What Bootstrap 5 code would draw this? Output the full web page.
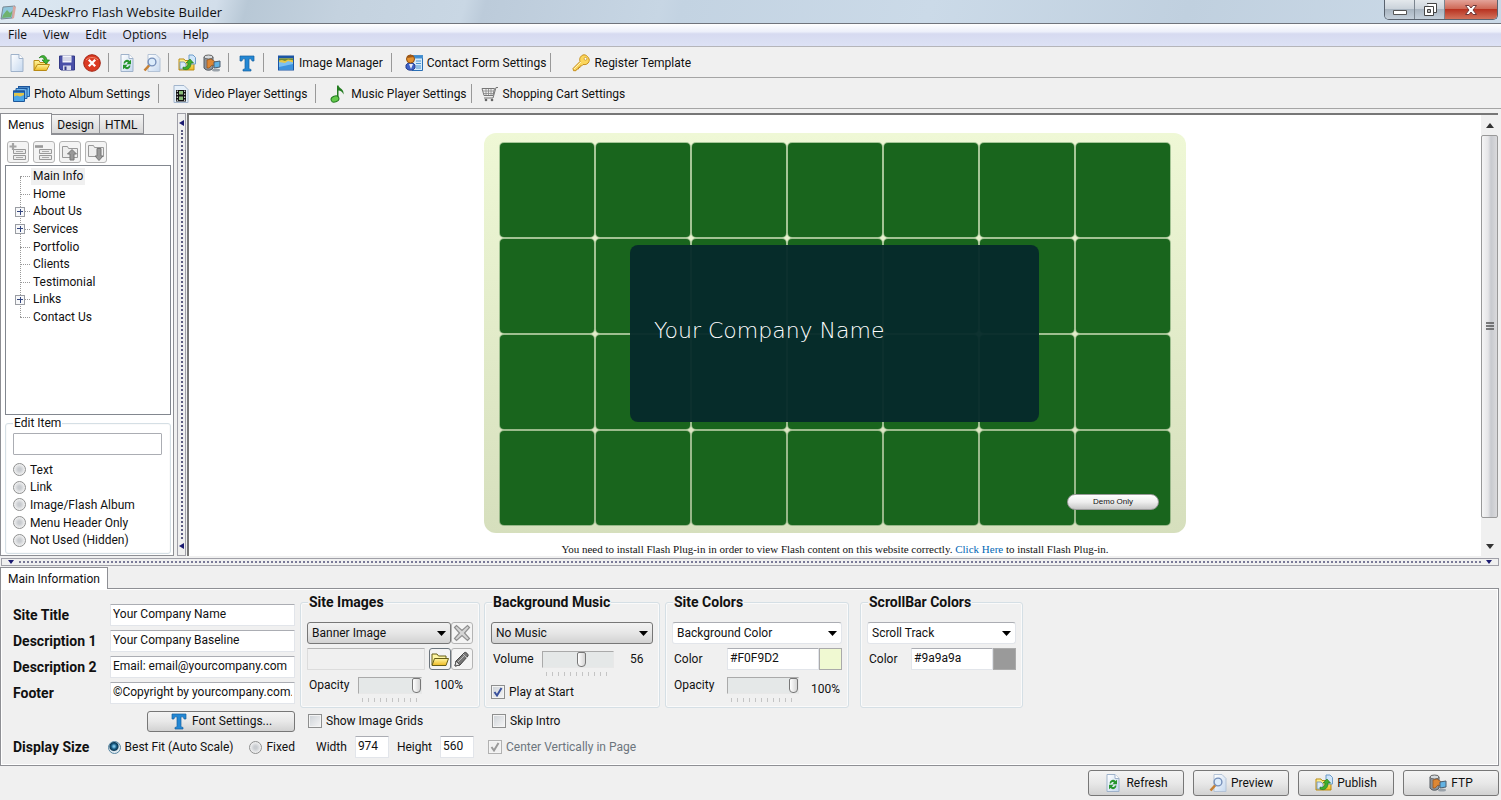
<!DOCTYPE html>
<html lang="en">
<head>
<meta charset="utf-8">
<meta name="viewport" content="width=device-width, initial-scale=1">
<title>A4DeskPro Flash Website Builder</title>
<link href="https://cdn.jsdelivr.net/npm/bootstrap@5.3.0/dist/css/bootstrap.min.css" rel="stylesheet">
<script src="https://cdn.jsdelivr.net/npm/bootstrap@5.3.0/dist/js/bootstrap.bundle.min.js" defer></script>
<style>
:root{--face:#f0f0f0;--edge:#8e8f94;--soft:#d5dfe5}
body{font:12px/16px Roboto,"Liberation Sans",sans-serif;color:#111;background:var(--face)}
.app{min-height:100vh}
button,input,select{font:inherit;color:inherit}
.ic{width:18px;height:18px;flex:none}
.titlebar{height:24px;border-bottom:1px solid #70747c;font:13px/22px "Open Sans","Noto Sans",sans-serif;
  background:linear-gradient(105deg,#dce8f2 0,#d2deea 210px,#b8c8d6 240px,#c4d2df 330px,#c9d7e4 450px,#bccbda 470px,#c7d6e4 640px,#c3d3e2 660px,#cbdae8 900px,#c0d0df 1150px,#cad9e7 1400px)}
.winbtns{border:1px solid #59626e;border-top:0;border-radius:0 0 5px 5px;height:20px;margin-right:3px;overflow:hidden}
.winbtns button{border:0;border-right:1px solid #7b858f;padding:0;width:30px;height:19px;line-height:0;background:linear-gradient(#e3e8ec,#cbd3db 45%,#a9b5c1 50%,#c4cfda)}
.winbtns .closer{width:52px;border-right:0;background:linear-gradient(#e3a399,#cf6a58 45%,#b93422 50%,#d2735c)}
.menubar{height:23px;font:12px/22px "Open Sans","Noto Sans",sans-serif;border-bottom:1px solid #b5b5b9;
  background:linear-gradient(#fff,#eceffa 35%,#d6daf0 45%,#dde2f5)}
.menubar a{color:#111;text-decoration:none}
.tbar{height:31px;padding-top:1px;border-bottom:1px solid #a5a5a5;background:var(--face)}
.tbtn{border:0;background:none;padding:0;height:24px;display:flex;align-items:center;justify-content:center;gap:4px;white-space:nowrap}
.tbtn.solo{width:25px}
.vsep{width:1px;height:19px;background:#999;margin:0 5px 0 4px}
.side{width:174px}
.tab{border:1px solid var(--edge);border-left-width:0;padding:0 5px;height:20px;line-height:20px;background:linear-gradient(#f4f4f4,#e6e6e6 50%,#d8d8d8)}
.tab.on{background:#fff;height:22px;line-height:20px;border-bottom:0;margin-bottom:-1px;position:relative;border-left-width:1px;padding:0 7px}
.page{background:#fff;border:1px solid var(--edge);padding:6px 2px 1px 4px}
.treebtns{gap:4px;padding:0 0 2px 2px}
.sqbtn{width:22px;height:22px;padding:0;border:1px solid #b4b4b4;border-radius:3px;background:#f4f4f4;line-height:0;display:flex;align-items:center;justify-content:center}
.treebox{border:1px solid #82878f;padding:2px 0 0 14px;min-height:170px;background:#fff}
.tree{height:158px;position:relative}
.tree::before{content:"";position:absolute;left:0;top:9px;bottom:9px;border-left:1px dotted #999}
.tree li{flex:1 1 0;display:flex;align-items:center}
.tree li::before{content:"";width:10px;border-top:1px dotted #999;margin-right:1px}
.tree a{color:#111;text-decoration:none;padding:0 2px;line-height:17px}
.tree a.cur{background:#f0f0f0}
.plus{position:absolute;left:-5px;width:10px;height:10px;border:1px solid #9a9da3;background:#f7f8fa;padding:0;line-height:0}
.plus::before{content:"";position:absolute;left:1px;top:3px;width:6px;height:1px;background:#33457f}
.plus::after{content:"";position:absolute;left:4px;top:1px;width:1px;height:6px;background:#33457f}
fieldset.grp{border:1px solid var(--soft);border-radius:3px;padding:0 6px;box-shadow:inset 0 0 0 1px #fafafa;min-width:0}
.grp legend{float:none;width:auto;margin:0 0 0 1px;padding:0 1px;font-size:12px;line-height:16px;position:relative;background:var(--face)}
.page .grp{padding:0 8px 4px 7px}
.page .grp legend{background:#fff;font-weight:400;margin:0 0 2px}
.work .grp legend,.lbl{font-weight:700;font-size:14px}
.fld{border:1px solid #e2e5ea;border-top-color:#abadb3;background:#fff;height:22px;padding:0 2px 2px;min-width:0;border-radius:1px}
.fld:disabled{background:var(--face);border-color:#dcdcdc;border-top-color:#b5b5b5}
.fld.boxed{border-color:#abadb3;margin-bottom:6px}
.radios{height:88px}
.radios label,.chk{display:flex;align-items:center;gap:4px;white-space:nowrap}
.radios label{flex:1 1 0}
.rd{appearance:none;width:13px;height:13px;margin:0;border:1px solid #8e8f8f;border-radius:50%;background:radial-gradient(#c9ccd0 20%,#f5f5f5 75%);flex:none}
.rd:checked{border-color:#5586a3;background:radial-gradient(circle at 45% 40%,#7cc4e8 8%,#155a83 30%,#0d3955 45%,#dfe9ef 58%)}
.ck{appearance:none;width:14px;height:14px;margin:0;border:1px solid #8e8f8f;box-shadow:inset 0 0 0 1px #f4f4f4;background:linear-gradient(135deg,#cdd2d7,#f6f6f6);flex:none}
.ck:checked{background:url("data:image/svg+xml,%3Csvg xmlns='http://www.w3.org/2000/svg' viewBox='0 0 12 12'%3E%3Cpath d='M2.5 6l2.5 3.500 4.500-7.500' fill='none' stroke='%233a519c' stroke-width='2'/%3E%3C/svg%3E"),linear-gradient(135deg,#cdd2d7,#f6f6f6)}
.ck:disabled{border-color:#b1b1b1;background:url("data:image/svg+xml,%3Csvg xmlns='http://www.w3.org/2000/svg' viewBox='0 0 12 12'%3E%3Cpath d='M2.500 6l2.500 3.500 4.500-7.500' fill='none' stroke='%23999' stroke-width='2'/%3E%3C/svg%3E")}
.vsplit{width:9px;border:1px solid #a0a0a8;padding:6px 0;margin:0 1px 0 3px}
.vsplit i{flex:1;border-left:2px dotted #5c5c80;margin:4px 0}
.hsplit{height:8px;border:1px solid #a0a0a8;margin:2px 2px 1px 1px;padding:0 6px}
.hsplit i{flex:1;border-top:2px dotted #7a7a98;margin:0 5px}
.view{background:#fff;border-left:2px solid #777;border-top:2px solid #777;flex:1 1 0;min-width:0;margin-right:3px}
.site{overflow:hidden;flex:1 1 0;min-width:0;height:0;min-height:100%;padding-top:18px}
.board{width:702px;max-width:100%;position:relative;padding:10px 16px 8px;border-radius:12px;background:linear-gradient(#eff8d6,#d6dfbd);margin:0 auto}
.tiles{display:grid;grid-template-columns:repeat(7,1fr);gap:2px}
.tiles span{height:94px;border-radius:4px;background:#19651d;box-shadow:0 0 0 1px #19651d55}
.banner{position:absolute;left:146px;top:112px;width:409px;height:177px;border-radius:8px;background:#062a2bf6;color:#fff;padding:0 24px 6px;font:200 22px/28px "DejaVu Sans",sans-serif;display:flex;align-items:center}
.demo{position:absolute;right:27px;bottom:23px;width:92px;height:16px;border:1px solid #999;border-radius:8px;padding:0;background:linear-gradient(#fff,#eee 50%,#c6c6c6);font:8px/12px "Liberation Sans",sans-serif}
.plug{font:11px/12px "Liberation Serif",serif;padding-top:10px;white-space:nowrap}
.plug a{color:#0066b5;text-decoration:none}
.sbar{width:17px;background:#f0f0f0}
.sbar div{height:20px;display:flex;align-items:center;justify-content:center}
.sbar .thumb{flex:1;height:auto;border:1px solid #999;border-radius:2px;background:linear-gradient(90deg,#f5f5f5,#e6e6e8 40%,#c8cacf 60%,#dadadc);margin-bottom:18px}
.work{border:1px solid var(--edge);box-shadow:inset 0 0 0 1px #fff;margin:0 2px 0 0;padding:5px 12px 5px}
.fields{padding-top:10px}
.field-row{height:22px;margin-bottom:4px}
.field-row .lbl{width:97px}
.sect{height:114px}
.sect .inner{padding-top:12px}
.below{height:26px}
.sel{appearance:none;border:1px solid #777;border-radius:3px;height:22px;padding:0 14px 0 4px;min-width:0;width:100%;
 background:url("data:image/svg+xml,%3Csvg xmlns='http://www.w3.org/2000/svg' viewBox='0 0 10 5'%3E%3Cpath d='M0 0h9L4.500 5z'/%3E%3C/svg%3E") no-repeat right 3px center/10px 5px,linear-gradient(#f2f2f2,#e6e6e6 50%,#d2d2d2)}
.sel.flat{border-color:#e2e5ea;border-top-color:#abadb3;background-image:url("data:image/svg+xml,%3Csvg xmlns='http://www.w3.org/2000/svg' viewBox='0 0 10 5'%3E%3Cpath d='M0 0h9L4.500 5z'/%3E%3C/svg%3E");background-color:#fff}
.slide{line-height:0}
.slide input{appearance:none;width:100%;height:17px;margin:0;border:1px solid #e8e8e8;border-top-color:#aaa;border-left-color:#aaa;background:#e5e8e8;display:block}
.slide input::-webkit-slider-thumb{appearance:none;width:9px;height:15px;border:1px solid #777;border-radius:2px 2px 4px 4px;background:linear-gradient(90deg,#fff,#d5d5d5)}
.ticks{height:4px;margin:4px 0 0 4px;width:58px;background:repeating-linear-gradient(90deg,#c4c4c4 0 1px,transparent 1px 6px)}
.pbtn{border:1px solid #777;border-radius:3px;background:linear-gradient(#f4f4f4,#e8e8e8 50%,#d2d2d2);padding:0;display:flex;align-items:center;justify-content:center;gap:4px}
.foot{height:34px;padding-right:2px}
.foot .pbtn{width:96px;height:26px}
.fgap{gap:9px}
.sw{width:23px;height:22px;border:1px solid #aaa;padding:0}
.cl{background:#f0f9d2}.cg{background:#9a9a9a}
.colA{width:282px;margin-right:5px}.colB{width:180px;margin-right:4px}.colC{width:176px;margin-right:5px}.colD{width:184px;margin-right:11px}.colE{width:163px}
.fontset{width:148px;height:21px}
.dsp{width:97px}
.srow{padding-top:7px;height:34px}.srow.up{height:40px}
.sl{width:51px;padding-left:2px}.sn{width:64px}.wd{width:72px}
.wd .ticks{width:66px}
.cl-l{width:55px;padding-left:2px}.cs-l{width:44px;padding-left:2px}
.num{width:34px}
</style>
</head>
<body>
<svg width="0" height="0" class="position-absolute" aria-hidden="true">
 <defs><linearGradient id="gf" x2="0" y2="1"><stop stop-color="#fff6a0"/><stop offset="1" stop-color="#eeb923"/></linearGradient>
 <linearGradient id="gb" x2="1" y2="1"><stop stop-color="#fff"/><stop offset="1" stop-color="#c5d8ef"/></linearGradient></defs>
 <symbol id="doc" viewBox="0 0 18 18"><path d="M3 .5h8l4 4v13H3z" fill="url(#gb)" stroke="#9fb2ca"/><path d="M11 .5v4h4" fill="#fff" stroke="#9fb2ca"/></symbol>
 <symbol id="open" viewBox="0 0 18 18"><path d="M1 16.500V6.500h5l1 2h7v3" fill="url(#gf)" stroke="#b98b14"/><path d="M1 16.500l3.500-6h12l-3 6z" fill="url(#gf)" stroke="#b98b14"/><path d="M6 4c3-4 7-3 8 2h2.500L13 10 9 6h2.500C10.500 3 8.500 2.500 6 4z" fill="#3fb534" stroke="#20791b" stroke-width=".7"/></symbol>
 <symbol id="save" viewBox="0 0 18 18"><path d="M1.500 2h15v14H3l-1.500-1.500z" fill="#4a50a8" stroke="#343a86"/><path d="M4.500 1.500h9v7h-9z" fill="#f3f4fb"/><path d="M5 4h8M5 6h8" stroke="#b9bcd6"/><path d="M5 11.500h8V16H5z" fill="#d8daeb"/><path d="M6.500 12.500h2V16h-2z" fill="#343a86"/></symbol>
 <symbol id="stop" viewBox="0 0 18 18"><circle cx="9" cy="9" r="8.300" fill="#db3a22" stroke="#a32413"/><path d="M3 6a7 5 0 0 1 12 0" stroke="#f08d72" fill="none"/><path d="M5.800 5.800l6.400 6.400m0-6.400l-6.400 6.400" stroke="#fff" stroke-width="2.300"/></symbol>
 <symbol id="refresh" viewBox="0 0 18 18"><use href="#doc"/><path d="M5.500 9.500c.5-4 4.500-4.500 6-2.500l1.500-1.200v4.400H8.500L10 8.600C9 7.500 7.500 8 7 9.500zM12.500 11.500c-.5 4-4.500 4.500-6 2.500L5 15.200v-4.400h4.500L8 12.400c1 1.100 2.500.6 3-.9z" fill="#26962e"/></symbol>
 <symbol id="find" viewBox="0 0 18 18"><path d="M5 .5h8l4 4v13H5z" fill="url(#gb)" stroke="#b4c3d6"/><path d="M6.500 11L1.500 16.500" stroke="#c68135" stroke-width="2.600"/><circle cx="9" cy="8" r="3.900" fill="#dcecfb" stroke="#7690ba" stroke-width="1.400"/></symbol>
 <symbol id="pub" viewBox="0 0 18 18"><path d="M1 5h5l1 1.500h9V16H1z" fill="url(#gf)" stroke="#b98b14"/><path d="M11 1h4l2.500 2.500V10H11z" fill="#cfe5fa" stroke="#6d9cc9"/><path d="M2 8h4l2 2v5H2z" fill="#d8e8f8" stroke="#7d9ec0"/><path d="M5 13c3 1 5-1 5-4H8l4-4 3.500 4H13c0 5-3 8-8 6z" fill="#3fae2e" stroke="#1e7417" stroke-width=".6"/></symbol>
 <symbol id="ftp" viewBox="0 0 18 18"><path d="M1 3v11c2 3 7 3 9 0V3z" fill="#8c9299" stroke="#53585e"/><ellipse cx="5.500" cy="3" rx="4.500" ry="2" fill="#d4d9dd" stroke="#666"/><path d="M4 6l4-1 6 4-2 3-3-1-3 3H4z" fill="#dd8735" stroke="#975018" stroke-width=".7"/><path d="M11 8l6-1v6l-6 1z" fill="#62b3e4" stroke="#4a5d70"/><ellipse cx="13" cy="16" rx="4" ry="1.500" fill="#9aa2aa"/></symbol>
 <symbol id="tee" viewBox="0 0 18 18"><path d="M2 2h14v5h-2c-.3-1.700-.7-2.200-3-2.200v9c0 1.200.5 1.400 2 1.600V17H5v-1.600c1.500-.2 2-.4 2-1.600v-9C4.700 4.800 4.300 5.300 4 7H2z" fill="#2387d4" stroke="#15609f" stroke-width=".7"/></symbol>
 <symbol id="img" viewBox="0 0 18 18"><path d="M1 1.500h16v15H1z" fill="#1b55a4"/><path d="M2 4.500h14v11H2z" fill="#7cc0f2"/><path d="M2 4.500h14v4l-5-1.500-3 2-6-1z" fill="#e7c848"/><path d="M2 4.500h14v1.800l-5-.8-3 1.500-3-1-3 .5z" fill="#718b32"/><path d="M2 13l14-3v5.500H2z" fill="#3d92dd"/></symbol>
 <symbol id="contact" viewBox="0 0 18 18"><path d="M7 1.500h10.500v15H7z" fill="#d5ebfb" stroke="#2a6fb5"/><path d="M7 1.500h10.500V4H7zM11 7h5M11 9.500h5M11 12h5M11 14h5" fill="#3c8bd3" stroke="#4a92cf"/><path d="M1 11c2-3 7-3 9 0v3c-2 3-7 3-9 0z" fill="#3f62c7" stroke="#253f91"/><path d="M4 10l2 5 2-5z" fill="#e8ecfa"/><circle cx="5.500" cy="5" r="4" fill="#e5902b" stroke="#8e4f13"/><path d="M2 4C3 0 7 0 9 3z" fill="#9b5618"/></symbol>
 <symbol id="key" viewBox="0 0 18 18"><path d="M1 14.500l7-7c-1-3 .5-5.500 3-6.500 1.500-.5 3 0 4.500 1.500S17.700 6 17 7.500c-1 2.500-3 3.500-6 3l-1.500 1.500H8v1.500H6.500V15H5l-1 1.700H1.500z" fill="#fbd65c" stroke="#c68e1c"/><circle cx="13.500" cy="4.800" r="1.400" fill="#fff" stroke="#c68e1c" stroke-width=".7"/><path d="M2 15l7-7" stroke="#fff2b6"/></symbol>
 <symbol id="album" viewBox="0 0 18 18"><path d="M6.500 1.500h11v10h-11z" fill="#72b8ed" stroke="#2162a7"/><path d="M4 3.500h11v10H4z" fill="#72b8ed" stroke="#2162a7"/><path d="M1.500 6h11v10.500h-11z" fill="#4ba6e8" stroke="#1c569a"/><path d="M1 5.500h12v2H1zM3.500 3h12v1.500M6 1h12v1.500H6z" fill="#1d559c"/><path d="M2 8h10v2l-4 1.500-3-1-3 1z" fill="#e0c44a"/></symbol>
 <symbol id="video" viewBox="0 0 18 18"><path d="M2 .5h10l4 4v13H2z" fill="#e6f0fa" stroke="#a2b5cc"/><path d="M4 5h10v11.500H4z" fill="#111"/><path d="M7 6h4v3.500H7zM7 11.500h4V15H7z" fill="#89bc7a"/><path d="M5.300 5.500v11M12.700 5.500v11" stroke="#eee" stroke-dasharray="1.500 1.500"/></symbol>
 <symbol id="music" viewBox="0 0 18 18"><path d="M8 14V.5h1.500c.5 3 6 3.500 5 9-1-2.500-3-4-5-4V14" fill="#237b20"/><ellipse cx="6" cy="14" rx="4" ry="3" fill="#65ca4c" stroke="#237b20" transform="rotate(-20 6 14)"/></symbol>
 <symbol id="cart" viewBox="0 0 18 18"><path d="M1 3.500h12.500L12 10.500H3zM17 2.500h-2l-3 10.500H3" fill="#eee" stroke="#777"/><path d="M2 6h11M3 8.500h9.500M5 4v6m2.500-6v6M10 4v6" stroke="#888" stroke-width=".8"/><circle cx="5" cy="15" r="1.300" fill="#666"/><circle cx="11" cy="15" r="1.300" fill="#666"/></symbol>
 <symbol id="folder" viewBox="0 0 18 18"><path d="M1 15V4h5l1.500 2H15v3" fill="#fff7a5" stroke="#665e17"/><path d="M1 15.500L3.500 8.500h14l-2.500 7z" fill="url(#gf)" stroke="#665e17"/></symbol>
 <symbol id="pen" viewBox="0 0 18 18"><path d="M2 16l1-5 8.500-8.500c1-1 4.500 2 3.500 3.500L7 15z" fill="#777" stroke="#444"/><path d="M3 11l4 4-5 1z" fill="#ddd" stroke="#555"/><path d="M10 4l4 4M5 12l7-7" stroke="#bbb"/></symbol>
 <symbol id="cross" viewBox="0 0 18 18"><path d="M1.500 3.500l2-2L9 6.500l5.500-5 2 2L11.500 9l5 5.500-2 2L9 11.500l-5.500 5-2-2L6.500 9z" fill="#d6d6d6" stroke="#8f8f8f" stroke-width="1.200"/></symbol>
 <symbol id="rows" viewBox="0 0 18 18"><path d="M4.500 6.500h12v4h-12zM4.500 12.500h12v4h-12z" fill="#ececec" stroke="#999"/><path d="M7 8.500h7M7 14.500h7" stroke="#aaa"/></symbol>
 <symbol id="add" viewBox="0 0 18 18"><use href="#rows"/><path d="M4 0v7M.5 3.500h7" stroke="#a4a4a4" stroke-width="2.200"/></symbol>
 <symbol id="sub" viewBox="0 0 18 18"><use href="#rows"/><path d="M0 3.500h8" stroke="#999" stroke-width="2.600"/></symbol>
 <symbol id="fup" viewBox="0 0 18 18"><path d="M1.500 14.500v-11h5l1 2h9v9z" fill="#eee" stroke="#999"/><path d="M11 6.500L6.500 11H9v6h4v-6h2.500z" fill="#999" stroke="#777"/></symbol>
 <symbol id="fdn" viewBox="0 0 18 18"><path d="M1.500 13.500v-11h5l1 2h9v9z" fill="#eee" stroke="#999"/><path d="M12 17.500L8 13h2V5.500h4V13h2z" fill="#999" stroke="#777"/></symbol>
</svg>

<div class="app d-flex flex-column">
 <header>
  <div class="titlebar d-flex justify-content-between">
   <div class="d-flex align-items-center gap-1"><svg class="ic" viewBox="0 0 18 18"><path d="M3 4l12-1-3 12-11 1z" fill="#8fc6dc" stroke="#7b8a94"/><path d="M3 12l4-5 3 3 3-3-2 7-9 1z" fill="#6fb26e"/><path d="M13 3l3 1-2 11-2 1z" fill="#d8a7a0"/></svg><span>A4DeskPro Flash Website Builder</span></div>
   <div class="winbtns d-flex">
    <button aria-label="Minimize"><svg width="16" height="16"><path d="M1.500 8.500h13v4h-13z" fill="#fff" stroke="#555"/></svg></button>
    <button aria-label="Restore"><svg width="16" height="16"><path d="M5 1.500h9.500v9H12M2.500 4.500h9v9h-9z" fill="#fff" stroke="#444"/><path d="M5.500 7.500h3v3h-3z" fill="#bbb" stroke="#444"/></svg></button>
    <button class="closer" aria-label="Close"><svg width="16" height="16"><path d="M2.500 3.500h3.500l2 2.500 2-2.500h3.500L10 8l3.500 4.500H10L8 10l-2 2.500H2.500L6 8z" fill="#fff" stroke="#70393a"/></svg></button>
   </div>
  </div>
  <nav class="menubar d-flex px-2" aria-label="Menu"><a href="#" class="me-3">File</a><a href="#" class="me-3">View</a><a href="#" class="me-3">Edit</a><a href="#" class="me-3">Options</a><a href="#">Help</a></nav>
  <div class="tbar d-flex align-items-center px-1">
   <button class="tbtn solo" aria-label="New"><svg class="ic"><use href="#doc"/></svg></button>
   <button class="tbtn solo" aria-label="Open"><svg class="ic"><use href="#open"/></svg></button>
   <button class="tbtn solo" aria-label="Save"><svg class="ic"><use href="#save"/></svg></button>
   <button class="tbtn solo" aria-label="Close project"><svg class="ic"><use href="#stop"/></svg></button>
   <span class="vsep"></span>
   <button class="tbtn solo" aria-label="Refresh"><svg class="ic"><use href="#refresh"/></svg></button>
   <button class="tbtn solo" aria-label="Preview"><svg class="ic"><use href="#find"/></svg></button>
   <span class="vsep"></span>
   <button class="tbtn solo" aria-label="Publish"><svg class="ic"><use href="#pub"/></svg></button>
   <button class="tbtn solo" aria-label="FTP"><svg class="ic"><use href="#ftp"/></svg></button>
   <span class="vsep"></span>
   <button class="tbtn solo" aria-label="Font"><svg class="ic"><use href="#tee"/></svg></button>
   <span class="vsep"></span>
   <button class="tbtn ms-2 me-1"><svg class="ic"><use href="#img"/></svg>Image Manager</button>
   <span class="vsep"></span>
   <button class="tbtn ms-2"><svg class="ic"><use href="#contact"/></svg>Contact Form Settings</button>
   <span class="vsep"></span>
   <button class="tbtn ms-3"><svg class="ic"><use href="#key"/></svg>Register Template</button>
  </div>
  <div class="tbar d-flex align-items-center px-2">
   <button class="tbtn ms-1 me-1"><svg class="ic"><use href="#album"/></svg>Photo Album Settings</button>
   <span class="vsep"></span>
   <button class="tbtn ms-2 me-1"><svg class="ic"><use href="#video"/></svg>Video Player Settings</button>
   <span class="vsep"></span>
   <button class="tbtn ms-2"><svg class="ic"><use href="#music"/></svg>Music Player Settings</button>
   <span class="vsep"></span>
   <button class="tbtn ms-1"><svg class="ic"><use href="#cart"/></svg>Shopping Cart Settings</button>
  </div>
 </header>

 <main class="d-flex flex-grow-1 pt-1">
  <aside class="side d-flex flex-column">
   <div class="d-flex align-items-end" role="tablist"><button class="tab on" role="tab">Menus</button><button class="tab" role="tab">Design</button><button class="tab" role="tab">HTML</button></div>
   <div class="page flex-grow-1 d-flex flex-column">
    <div class="treebtns d-flex">
     <button class="sqbtn" aria-label="Add item"><svg class="ic"><use href="#add"/></svg></button>
     <button class="sqbtn" aria-label="Remove item"><svg class="ic"><use href="#sub"/></svg></button>
     <button class="sqbtn" aria-label="Move up"><svg class="ic"><use href="#fup"/></svg></button>
     <button class="sqbtn" aria-label="Move down"><svg class="ic"><use href="#fdn"/></svg></button>
    </div>
    <div class="treebox flex-grow-1">
     <ul class="tree list-unstyled m-0 d-flex flex-column">
      <li><a href="#" class="cur">Main Info</a></li>
      <li><a href="#">Home</a></li>
      <li><button class="plus" aria-label="Expand About Us"></button><a href="#">About Us</a></li>
      <li><button class="plus" aria-label="Expand Services"></button><a href="#">Services</a></li>
      <li><a href="#">Portfolio</a></li>
      <li><a href="#">Clients</a></li>
      <li><a href="#">Testimonial</a></li>
      <li><button class="plus" aria-label="Expand Links"></button><a href="#">Links</a></li>
      <li><a href="#">Contact Us</a></li>
     </ul>
    </div>
    <fieldset class="grp">
     <legend>Edit Item</legend>
     <input class="fld boxed w-100" aria-label="Item text">
     <div class="radios d-flex flex-column">
      <label><input class="rd" type="radio" name="kind">Text</label>
      <label><input class="rd" type="radio" name="kind">Link</label>
      <label><input class="rd" type="radio" name="kind">Image/Flash Album</label>
      <label><input class="rd" type="radio" name="kind">Menu Header Only</label>
      <label><input class="rd" type="radio" name="kind">Not Used (Hidden)</label>
     </div>
    </fieldset>
   </div>
  </aside>
  <div class="vsplit d-flex flex-column align-items-center"><svg width="5" height="6"><path d="M5 0v6L0 3z" fill="#1a1a70"/></svg><i></i><svg width="5" height="6"><path d="M5 0v6L0 3z" fill="#1a1a70"/></svg></div>
  <section class="view d-flex">
   <div class="site">
    <div class="board">
     <div class="tiles"><span></span><span></span><span></span><span></span><span></span><span></span><span></span><span></span><span></span><span></span><span></span><span></span><span></span><span></span><span></span><span></span><span></span><span></span><span></span><span></span><span></span><span></span><span></span><span></span><span></span><span></span><span></span><span></span></div>
     <div class="banner">Your Company Name</div>
     <button class="demo">Demo Only</button>
    </div>
    <div class="plug text-center">You need to install Flash Plug-in in order to view Flash content on this website correctly. <a href="#">Click Here</a> to install Flash Plug-in.</div>
   </div>
   <div class="sbar d-flex flex-column" aria-hidden="true">
    <div><svg width="8" height="5"><path d="M0 5h8L4 0z" fill="#333"/></svg></div>
    <div class="thumb"><svg width="8" height="9"><path d="M0 1h8M0 4h8M0 7h8" stroke="#555" stroke-width="1.500"/></svg></div>
    <div><svg width="8" height="5"><path d="M0 0h8L4 5z" fill="#333"/></svg></div>
   </div>
  </section>
 </main>
 <div class="hsplit d-flex align-items-center"><svg width="6" height="4"><path d="M0 0h6L3 4z" fill="#1a1a70"/></svg><i></i><svg width="6" height="4"><path d="M0 0h6L3 4z" fill="#1a1a70"/></svg></div>

 <section>
  <div class="d-flex align-items-end" role="tablist"><button class="tab on" role="tab">Main Information</button></div>
  <form class="work d-flex">
   <div class="colA">
    <div class="fields">
     <div class="field-row d-flex align-items-center"><label class="lbl" for="f1">Site Title</label><input id="f1" class="fld flex-grow-1" value="Your Company Name"></div>
     <div class="field-row d-flex align-items-center"><label class="lbl" for="f2">Description 1</label><input id="f2" class="fld flex-grow-1" value="Your Company Baseline"></div>
     <div class="field-row d-flex align-items-center"><label class="lbl" for="f3">Description 2</label><input id="f3" class="fld flex-grow-1" value="Email: email@yourcompany.com"></div>
     <div class="field-row d-flex align-items-center"><label class="lbl" for="f4">Footer</label><input id="f4" class="fld flex-grow-1" value="©Copyright by yourcompany.com. ."></div>
    </div>
    <div class="below d-flex justify-content-end align-items-center"><button type="button" class="pbtn fontset"><svg class="ic"><use href="#tee"/></svg>Font Settings...</button></div>
    <div class="below d-flex align-items-center"><span class="lbl dsp">Display Size</span><label class="chk me-3"><input class="rd" type="radio" name="size" checked>Best Fit (Auto Scale)</label><label class="chk"><input class="rd" type="radio" name="size">Fixed</label></div>
   </div>
   <div class="colB">
    <fieldset class="grp sect"><legend>Site Images</legend>
     <div class="inner">
      <div class="d-flex"><select class="sel" aria-label="Site image"><option>Banner Image</option></select><button type="button" class="sqbtn flex-shrink-0" aria-label="Clear image"><svg class="ic"><use href="#cross"/></svg></button></div>
      <div class="d-flex pt-1"><input class="fld flex-grow-1 me-1" size="1" disabled aria-label="Image file"><button type="button" class="sqbtn border-secondary" aria-label="Browse"><svg class="ic"><use href="#folder"/></svg></button><button type="button" class="sqbtn" aria-label="Edit image"><svg class="ic"><use href="#pen"/></svg></button></div>
      <div class="d-flex srow"><label for="o1" class="sl">Opacity</label><div class="slide sn"><input id="o1" type="range" value="100"><div class="ticks"></div></div><output class="ms-2 ps-1">100%</output></div>
     </div>
    </fieldset>
    <div class="below d-flex align-items-center ps-2"><label class="chk"><input class="ck" type="checkbox">Show Image Grids</label></div>
    <div class="below d-flex align-items-center ps-3 gap-2"><label for="w1">Width</label><input id="w1" class="fld num" value="974"><label for="h1">Height</label><input id="h1" class="fld num" value="560"></div>
   </div>
   <div class="colC">
    <fieldset class="grp sect"><legend>Background Music</legend>
     <div class="inner">
      <select class="sel d-block" aria-label="Music"><option>No Music</option></select>
      <div class="d-flex srow up"><label for="v1" class="sl">Volume</label><div class="slide wd"><input id="v1" type="range" value="56"><div class="ticks"></div></div><output class="ms-3">56</output></div>
      <label class="chk"><input class="ck" type="checkbox" checked>Play at Start</label>
     </div>
    </fieldset>
    <div class="below d-flex align-items-center ps-2"><label class="chk"><input class="ck" type="checkbox">Skip Intro</label></div>
    <div class="below d-flex align-items-center ps-1"><label class="chk text-secondary"><input class="ck" type="checkbox" checked disabled>Center Vertically in Page</label></div>
   </div>
   <div class="colD">
    <fieldset class="grp sect"><legend>Site Colors</legend>
     <div class="inner">
      <select class="sel flat d-block" aria-label="Site colour"><option>Background Color</option></select>
      <div class="d-flex pt-1 align-items-center"><label for="c1" class="cl-l">Color</label><input id="c1" class="fld flex-grow-1" size="1" value="#F0F9D2"><button type="button" class="sw cl" aria-label="Pick colour"></button></div>
      <div class="d-flex srow"><label for="o2" class="cl-l">Opacity</label><div class="slide wd"><input id="o2" type="range" value="100"><div class="ticks"></div></div><output class="ms-2 ps-1 pt-1">100%</output></div>
     </div>
    </fieldset>
   </div>
   <div class="colE">
    <fieldset class="grp sect"><legend>ScrollBar Colors</legend>
     <div class="inner">
      <select class="sel flat d-block" aria-label="Scrollbar part"><option>Scroll Track</option></select>
      <div class="d-flex pt-1 align-items-center"><label for="c2" class="cs-l">Color</label><input id="c2" class="fld flex-grow-1" size="1" value="#9a9a9a"><button type="button" class="sw cg" aria-label="Pick colour"></button></div>
     </div>
    </fieldset>
   </div>
  </form>
 </section>
 <footer class="foot d-flex justify-content-end align-items-center">
  <div class="d-flex fgap">
  <button class="pbtn"><svg class="ic"><use href="#refresh"/></svg>Refresh</button>
  <button class="pbtn"><svg class="ic"><use href="#find"/></svg>Preview</button>
  <button class="pbtn"><svg class="ic"><use href="#pub"/></svg>Publish</button>
  <button class="pbtn"><svg class="ic"><use href="#ftp"/></svg>FTP</button>
  </div>
 </footer>
</div>
</body>
</html>
